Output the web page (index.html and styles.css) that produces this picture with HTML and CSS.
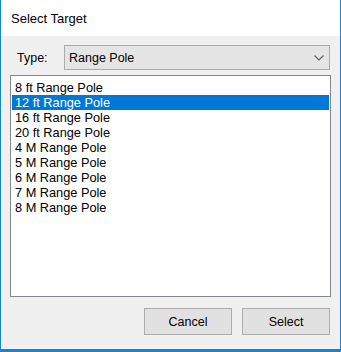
FILE: index.html
```html
<!DOCTYPE html>
<html lang="en">
<head>
    <meta charset="UTF-8">
    <title>Select Target</title>
    <link rel="stylesheet" href="styles.css">
</head>
<body>
    <div class="window">
        <div class="titlebar">Select Target</div>
        <div class="client">
            <div class="type-row">
                <span class="type-label">Type:</span>
                <div class="combo">
                    <span>Range Pole</span>
                    <svg class="chevron" width="10" height="6" viewBox="0 0 10 6">
                        <polyline points="0.5,0.5 5,5 9.5,0.5" fill="none" stroke="#606060" stroke-width="1.2"/>
                    </svg>
                </div>
            </div>
            <ul class="list">
                <li>8 ft Range Pole</li>
                <li class="selected">12 ft Range Pole</li>
                <li>16 ft Range Pole</li>
                <li>20 ft Range Pole</li>
                <li>4 M Range Pole</li>
                <li>5 M Range Pole</li>
                <li>6 M Range Pole</li>
                <li>7 M Range Pole</li>
                <li>8 M Range Pole</li>
            </ul>
            <div class="buttons">
                <button>Cancel</button>
                <button>Select</button>
            </div>
        </div>
    </div>
</body>
</html>
```

FILE: styles.css
```css
body {
    margin: 0;
    font-family: 'Liberation Sans', Arial, sans-serif;
    font-size: 12.5px;
    color: #000;
    background-color: #fff;
}
.window {
    width: 341px;
    height: 352px;
    box-sizing: border-box;
    display: flex;
    flex-direction: column;
    border-left: 1px solid #1883d7;
    border-right: 1px solid #1883d7;
    border-bottom: 3px solid #1883d7;
}
.titlebar {
    height: 36px;
    line-height: 38px;
    padding-left: 10px;
    font-size: 13px;
    background-color: #fff;
}
.client {
    flex: 1;
    display: flex;
    flex-direction: column;
    background-color: #f0f0f0;
    padding: 9px 9px 14px 9px;
}
.type-row {
    display: flex;
    align-items: center;
}
.type-label {
    width: 47px;
    padding-left: 7px;
    padding-top: 1px;
}
.combo {
    width: 266px;
    height: 25px;
    box-sizing: border-box;
    display: flex;
    align-items: center;
    justify-content: space-between;
    padding: 0 5px 0 4px;
    background-color: #e5e5e5;
    border: 1px solid #acacac;
}
.chevron {
    margin-top: 1px;
}
.list {
    list-style: none;
    margin: 5px 0 0 0;
    height: 222px;
    box-sizing: border-box;
    padding: 4px 1px 3px 1px;
    background-color: #fff;
    border: 1px solid #828790;
}
.list li {
    height: 15px;
    line-height: 15px;
    padding-left: 3px;
    font-size: 12.75px;
}
.list li.selected {
    background-color: #0078d7;
    color: #fff;
}
.buttons {
    display: flex;
    justify-content: flex-end;
    gap: 10px;
    margin-top: 11px;
    padding-right: 1px;
}
.buttons button {
    width: 88px;
    height: 27px;
    font-family: inherit;
    font-size: 12.5px;
    color: #000;
    background-color: #e1e1e1;
    border: 1px solid #adadad;
    padding: 0;
}
```
